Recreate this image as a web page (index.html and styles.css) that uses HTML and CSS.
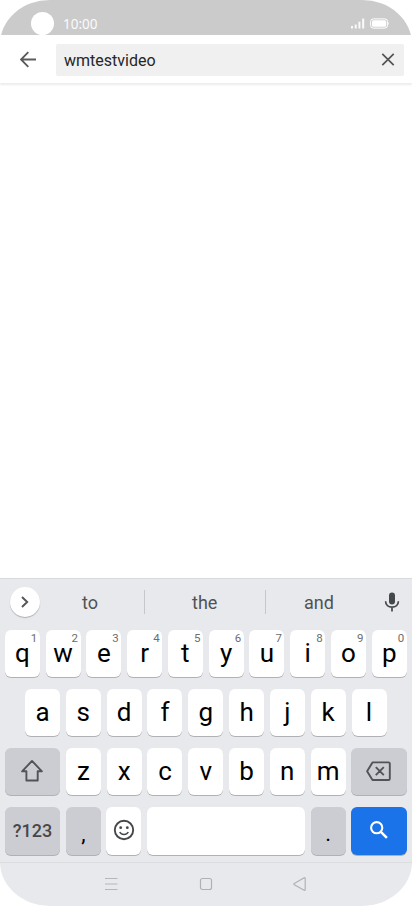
FILE: index.html
```html
<!DOCTYPE html>
<html lang="en">
<head>
<meta charset="utf-8">
<title>Search</title>
<link rel="stylesheet" href="styles.css">
</head>
<body>
<div class="phone">
  <header class="status">
    <span class="camera"></span>
    <span class="time">10:00</span>
    <svg class="signal" width="14" height="11" viewBox="0 0 14 11" fill="#fff"><path d="M0 8h2v2.500H0zM3.700 6.500h2v4h-2zM7.400 3.700h2v6.800h-2zM11.200.5h2v10h-2z"/></svg>
    <svg class="battery" width="20" height="11" viewBox="0 0 20 11"><rect x=".6" y=".9" width="17" height="9.200" rx="2.800" fill="none" stroke="#fff" stroke-width="1"/><rect x="2" y="2.300" width="14.200" height="6.400" rx="1.500" fill="#fff"/><path d="M18.300 3.800q1.400 1.700 0 3.400z" fill="#fff"/></svg>
  </header>
  <div class="toolbar">
    <svg class="back" width="18" height="18" viewBox="0 0 18 18" fill="none" stroke="#5c5c5c" stroke-width="1.900"><path d="M16 8.500H1.500M8.300 1.200 1 8.500l7.300 7.300"/></svg>
    <div class="field"><span>wmtestvideo</span>
      <svg width="14" height="14" viewBox="0 0 14 14" fill="none" stroke="#555" stroke-width="1.700"><path d="m1.300.8 11.400 11.400m0-11.400L1.300 12.200"/></svg>
    </div>
  </div>
  <main class="results"></main>
  <section class="keyboard">
    <div class="suggestions">
      <span class="expand"><svg width="10" height="14" viewBox="0 0 10 14" fill="none" stroke="#555" stroke-width="1.900"><path d="m2 2 5.200 5L2 12"/></svg></span>
      <span class="word">to</span><span class="word">the</span><span class="word">and</span>
      <svg class="mic" width="16" height="20" viewBox="0 0 16 20"><rect x="5" y=".5" width="6" height="12" rx="3" fill="#45484b"/><path d="M1.600 9.200c0 3.700 2.900 5.900 6.400 5.900s6.400-2.200 6.400-5.900M8 15v4.500" fill="none" stroke="#45484b" stroke-width="1.700"/></svg>
    </div>
    <div class="row">
      <span class="key">q<sup>1</sup></span><span class="key">w<sup>2</sup></span><span class="key">e<sup>3</sup></span><span class="key">r<sup>4</sup></span><span class="key">t<sup>5</sup></span><span class="key">y<sup>6</sup></span><span class="key">u<sup>7</sup></span><span class="key">i<sup>8</sup></span><span class="key">o<sup>9</sup></span><span class="key">p<sup>0</sup></span>
    </div>
    <div class="row inset">
      <span class="key">a</span><span class="key">s</span><span class="key">d</span><span class="key">f</span><span class="key">g</span><span class="key">h</span><span class="key">j</span><span class="key">k</span><span class="key">l</span>
    </div>
    <div class="row">
      <span class="key wide gray"><svg width="24" height="24" viewBox="0 0 24 24" fill="none" stroke="#515357" stroke-width="1.900" stroke-linejoin="round"><path d="M12 1.900 2.100 12.300h4.300v9.200h11.300v-9.200h4.200z"/></svg></span>
      <span class="key">z</span><span class="key">x</span><span class="key">c</span><span class="key">v</span><span class="key">b</span><span class="key">n</span><span class="key">m</span>
      <span class="key wide gray"><svg width="26" height="22" viewBox="0 0 26 22" fill="none" stroke="#515357" stroke-width="1.900" stroke-linejoin="round"><path d="M6.500 2.400h16q1.300 0 1.300 1.300v15q0 1.300-1.300 1.300h-16L1.100 11.200zM9.800 7.200l8 8m0-8-8 8"/></svg></span>
    </div>
    <div class="row last">
      <span class="key wide gray mode">?123</span>
      <span class="key gray punct">,</span>
      <span class="key"><svg width="22" height="22" viewBox="0 0 22 22" fill="none" stroke="#45484b" stroke-width="1.900"><circle cx="11" cy="11" r="9.200"/><path d="M6.700 13c1.800 3.400 6.800 3.400 8.600 0" stroke-width="1.500"/><circle cx="7.700" cy="8.700" r="1.400" fill="#45484b" stroke="none"/><circle cx="14.300" cy="8.700" r="1.400" fill="#45484b" stroke="none"/></svg></span>
      <span class="key space"></span>
      <span class="key gray punct">.</span>
      <span class="key wide search"><svg width="20" height="20" viewBox="0 0 20 20" fill="none" stroke="#fff"><circle cx="7.700" cy="7.700" r="5.600" stroke-width="2.100"/><path d="m11.900 11.900 6 6" stroke-width="2.500"/></svg></span>
    </div>
    <nav class="nav">
      <svg width="14" height="14" viewBox="0 0 14 14" fill="none" stroke="#b5b6b9" stroke-width="1"><path d="M0 1.500h12.500M0 7h12.500M0 12.500h12.500"/></svg>
      <svg width="14" height="14" viewBox="0 0 14 14" fill="none" stroke="#b0b1b4" stroke-width="1.200"><rect x="1.500" y="1.500" width="11" height="11" rx="2"/></svg>
      <svg width="14" height="14" viewBox="0 0 14 14" fill="none" stroke="#b0b1b4" stroke-width="1.200" stroke-linejoin="round"><path d="M12.200 1.300v11.400q0 1-1 .5L1.300 7.800q-1-.7 0-1.300l9.900-5.700q1-.5 1 .5z"/></svg>
    </nav>
  </section>
</div>
</body>
</html>
```
FILE: styles.css
```css
* { box-sizing: border-box; }
body { margin: 0; background: #fff; font-family: Roboto, sans-serif; }
svg { display: block; flex: none; }
.phone {
  width: 412px; height: 906px; overflow: hidden; background: #fff;
  border-radius: 50px / 44px;
  display: flex; flex-direction: column;
}
.status {
  height: 35.300px; flex: none; background: #cbcbcb; color: #fff;
  display: flex; align-items: flex-end; padding-left: 31px;
}
.camera { width: 23px; height: 23px; border-radius: 50%; background: #fff; }
.time { font: 13.500px/18px "Noto Sans", sans-serif; margin: 0 auto 2px 9px; opacity: .92; }
.signal { margin-bottom: 6.800px; opacity: .9; }
.battery { margin: 0 22.500px 6.800px 5px; }
.toolbar {
  height: 48px; flex: none; display: flex; align-items: center;
  padding: 1px 8px 0 20px; box-shadow: 0 2px 2px rgba(0,0,0,.08);
}
.field {
  flex: 1; height: 32px; margin-left: 18px; padding: 1px 9px 0 8px;
  background: #f0f0f0; border-radius: 2px; color: #262626; font-size: 16px;
  display: flex; align-items: center; justify-content: space-between;
}
.results { flex: 1; }
.keyboard { height: 328px; flex: none; background: #e8e9ed; border-top: 1px solid #d9dadd; padding-top: 50.600px; position: relative; }
.suggestions {
  position: absolute; top: 0; left: 0; width: 100%; height: 46px;
  display: flex; align-items: center; padding: 0 12px 0 10px;
}
.expand {
  width: 30px; height: 30px; border-radius: 50%; background: #fff;
  box-shadow: 0 1px 1px rgba(0,0,0,.25);
  display: flex; align-items: center; justify-content: center;
  margin-right: -4px;
}
.word {
  flex: 0 0 120.500px; height: 24px; line-height: 25px; text-align: center;
  font-size: 18px; color: #505356;
}
.word:nth-child(2) { flex-basis: 109px; border-right: 1px solid #c6c7ca; }
.word:nth-child(3) { border-right: 1px solid #c6c7ca; }
.word:nth-child(4) { flex-basis: 107px; }
.mic { margin-left: auto; }
.row { display: flex; justify-content: space-between; padding: 0 5.200px 0 4.800px; height: 47px; margin-bottom: 12px; }
.inset { padding: 0 25.400px 0 25px; }
.key {
  position: relative; width: 35px; height: 47px; border-radius: 6px; background: #fff;
  box-shadow: 0 1px 0.500px rgba(0,0,0,.24); color: #000; font-size: 26px;
  display: flex; align-items: center; justify-content: center; flex: none;
  padding-bottom: 1px;
}
.key sup { position: absolute; top: 2px; right: 2.500px; font-size: 11.500px; line-height: 12px; color: #6b6d70; }
.wide { width: 55.400px; }
.gray { background: #cccdd2; }
.last, .last .key { height: 48px; }
.mode { font-size: 18px; font-weight: 500; color: #45484b; }
.last .punct { padding-top: 6px; font-size: 22px; }
.space { width: 158px; }
.search { background: #1a73e8; }
.row.last { margin: 0 0 7.400px; }
.nav {
  height: 43px; border-top: 1px solid #dcdde0;
  display: flex; align-items: center; justify-content: center; gap: 80px;
}
```
